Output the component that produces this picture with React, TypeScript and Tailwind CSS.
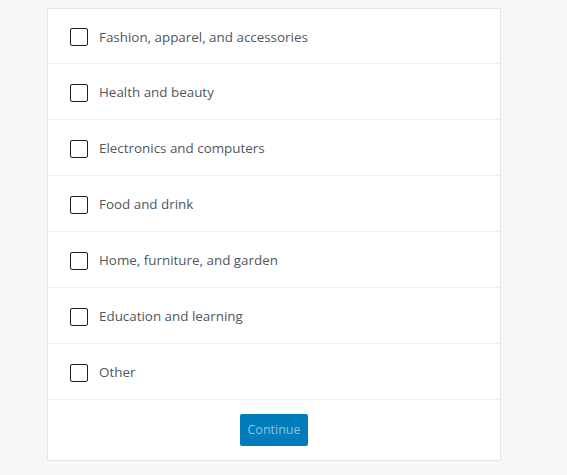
const options = [
  "Fashion, apparel, and accessories",
  "Health and beauty",
  "Electronics and computers",
  "Food and drink",
  "Home, furniture, and garden",
  "Education and learning",
  "Other",
];

export default function App() {
  return (
    <div className="min-h-[475px] bg-[#f6f7f7] pt-2 pl-[47px]" style={{ fontFamily: '"Open Sans", "Noto Sans", sans-serif' }}>
      <div className="w-[454px] rounded-[2px] border border-[#e2e4e7] bg-white">
        {options.map((o, i) => (
          <label
            key={o}
            className={`flex items-center border-b border-[#eeeeee] pt-[2px] pl-[22px] ${i === 0 ? "h-[55px]" : "h-[56px]"}`}
          >
            <span className="h-[18px] w-[18px] rounded-[2px] border border-[#1e1e1e] bg-white" />
            <span className="ml-[11px] text-[13.4px] text-[#50575e]">{o}</span>
          </label>
        ))}
        <div className="flex h-[60px] items-center justify-center">
          <button className="h-[32px] w-[68px] rounded-[2px] bg-[#007cba] text-[12.5px] text-[#8cc3e2]">
            Continue
          </button>
        </div>
      </div>
    </div>
  );
}
